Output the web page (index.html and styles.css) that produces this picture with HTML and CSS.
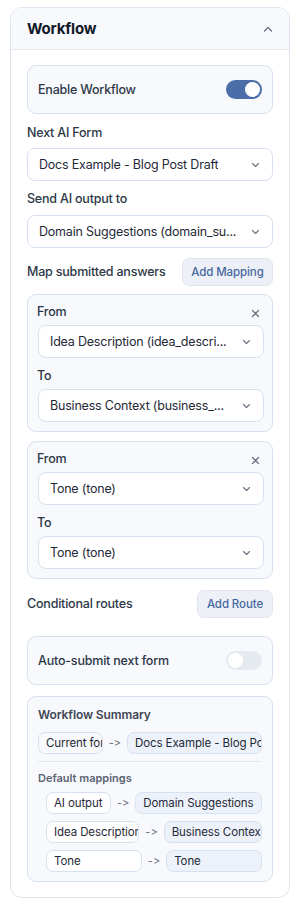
FILE: index.html
```html
<!DOCTYPE html>
<html>
<head>
<meta charset="utf-8">
<link rel="stylesheet" href="styles.css">
</head>
<body>
<div class="panel">
  <div class="panel-head">
    <span class="panel-title">Workflow</span>
    <svg class="head-chev" width="10" height="6" viewBox="0 0 10 6"><path d="M1.5 5 L5 1.5 L8.5 5" fill="none" stroke="#6b7280" stroke-width="1.3" stroke-linecap="round" stroke-linejoin="round"/></svg>
  </div>
  <div class="panel-body">
    <div class="toggle-box">
      <span class="toggle-label">Enable Workflow</span>
      <span class="switch on"><span class="knob"></span></span>
    </div>

    <div class="field-label l1">Next AI Form</div>
    <div class="select">
      <span class="select-text">Docs Example - Blog Post Draft</span>
      <svg class="chev" width="9" height="6" viewBox="0 0 9 6"><path d="M1.5 1.5 L4.5 4.5 L7.5 1.5" fill="none" stroke="#6b7280" stroke-width="1.1" stroke-linecap="round" stroke-linejoin="round"/></svg>
    </div>

    <div class="field-label l2">Send AI output to</div>
    <div class="select">
      <span class="select-text">Domain Suggestions (domain_su...</span>
      <svg class="chev" width="9" height="6" viewBox="0 0 9 6"><path d="M1.5 1.5 L4.5 4.5 L7.5 1.5" fill="none" stroke="#6b7280" stroke-width="1.1" stroke-linecap="round" stroke-linejoin="round"/></svg>
    </div>

    <div class="row-head r1">
      <span class="field-label">Map submitted answers</span>
      <button class="btn btn-map">Add Mapping</button>
    </div>

    <div class="map-card m1">
      <div class="map-top">
        <span class="map-label">From</span>
        <svg class="close" width="9" height="9" viewBox="0 0 9 9"><path d="M1.5 1.5 L7.5 7.5 M7.5 1.5 L1.5 7.5" fill="none" stroke="#6b7280" stroke-width="1.3" stroke-linecap="round"/></svg>
      </div>
      <div class="select">
        <span class="select-text">Idea Description (idea_descri...</span>
        <svg class="chev" width="9" height="6" viewBox="0 0 9 6"><path d="M1.5 1.5 L4.5 4.5 L7.5 1.5" fill="none" stroke="#6b7280" stroke-width="1.1" stroke-linecap="round" stroke-linejoin="round"/></svg>
      </div>
      <div class="map-label to">To</div>
      <div class="select">
        <span class="select-text">Business Context (business_...</span>
        <svg class="chev" width="9" height="6" viewBox="0 0 9 6"><path d="M1.5 1.5 L4.5 4.5 L7.5 1.5" fill="none" stroke="#6b7280" stroke-width="1.1" stroke-linecap="round" stroke-linejoin="round"/></svg>
      </div>
    </div>

    <div class="map-card m2">
      <div class="map-top">
        <span class="map-label">From</span>
        <svg class="close" width="9" height="9" viewBox="0 0 9 9"><path d="M1.5 1.5 L7.5 7.5 M7.5 1.5 L1.5 7.5" fill="none" stroke="#6b7280" stroke-width="1.3" stroke-linecap="round"/></svg>
      </div>
      <div class="select">
        <span class="select-text">Tone (tone)</span>
        <svg class="chev" width="9" height="6" viewBox="0 0 9 6"><path d="M1.5 1.5 L4.5 4.5 L7.5 1.5" fill="none" stroke="#6b7280" stroke-width="1.1" stroke-linecap="round" stroke-linejoin="round"/></svg>
      </div>
      <div class="map-label to">To</div>
      <div class="select">
        <span class="select-text">Tone (tone)</span>
        <svg class="chev" width="9" height="6" viewBox="0 0 9 6"><path d="M1.5 1.5 L4.5 4.5 L7.5 1.5" fill="none" stroke="#6b7280" stroke-width="1.1" stroke-linecap="round" stroke-linejoin="round"/></svg>
      </div>
    </div>

    <div class="row-head r2">
      <span class="field-label">Conditional routes</span>
      <button class="btn btn-route">Add Route</button>
    </div>

    <div class="toggle-box auto">
      <span class="toggle-label">Auto-submit next form</span>
      <span class="switch off"><span class="knob"></span></span>
    </div>

    <div class="summary">
      <div class="sum-title">Workflow Summary</div>
      <div class="flow-row main">
        <span class="pill">Current form</span>
        <span class="arrow">-&gt;</span>
        <span class="pill blue">Docs Example - Blog Post Draft</span>
      </div>
      <div class="divider"></div>
      <div class="sum-sub">Default mappings</div>
      <div class="mappings">
        <div class="flow-row">
          <span class="pill white">AI output</span>
          <span class="arrow">-&gt;</span>
          <span class="pill blue">Domain Suggestions</span>
        </div>
        <div class="flow-row">
          <span class="pill white">Idea Description</span>
          <span class="arrow">-&gt;</span>
          <span class="pill blue">Business Context</span>
        </div>
        <div class="flow-row">
          <span class="pill white">Tone</span>
          <span class="arrow">-&gt;</span>
          <span class="pill blue">Tone</span>
        </div>
      </div>
    </div>
  </div>
</div>
</body>
</html>
```

FILE: styles.css
```css
* { box-sizing: border-box; }
html, body { margin: 0; padding: 0; background: #ffffff; }
body {
  font-family: Inter, "Noto Sans", sans-serif;
  font-variant-ligatures: none;
  font-feature-settings: "calt" 0, "liga" 0;
  color: #1f2937;
  padding: 7px 11px 9px 10px;
}
.panel {
  width: 280px;
  border: 1px solid #dfe5ee;
  border-radius: 12px;
  overflow: hidden;
  background: #fff;
}
.panel-head {
  height: 42px;
  background: #f7f9fc;
  border-bottom: 1px solid #e4e9f0;
  display: flex;
  align-items: center;
  justify-content: space-between;
  padding: 0 16px 0 16px;
}
.panel-title {
  font-size: 15px;
  font-weight: 700;
  color: #111827;
  letter-spacing: -0.2px;
}
.panel-body {
  padding: 15px 16px 15px 16px;
  display: flex;
  flex-direction: column;
}
.toggle-box {
  height: 49px;
  border: 1px solid #d7e1ef;
  border-radius: 9px;
  background: #f7f9fc;
  display: flex;
  align-items: center;
  justify-content: space-between;
  padding: 0 10px 0 10px;
}
.toggle-label {
  font-size: 12.5px;
  letter-spacing: -0.2px;
  font-weight: 500;
  color: #2d3748;
}
.switch {
  width: 36px;
  height: 19px;
  border-radius: 10px;
  display: flex;
  align-items: center;
  padding: 0 2px;
}
.switch .knob {
  width: 15px;
  height: 15px;
  border-radius: 50%;
  background: #fff;
}
.switch.on { background: #4b6ea8; justify-content: flex-end; }
.switch.off { background: #e5e9f0; justify-content: flex-start; }
.field-label {
  font-size: 12.5px;
  letter-spacing: -0.2px;
  font-weight: 500;
  color: #2d3748;
  line-height: 18px;
}
.l1 { margin-top: 10px; margin-bottom: 6px; }
.l2 { margin-top: 9px; margin-bottom: 7px; }
.select {
  height: 33px;
  border: 1px solid #d7e1ef;
  border-radius: 8px;
  background: #fff;
  display: flex;
  align-items: center;
  justify-content: space-between;
  gap: 6px;
  padding: 0 12px 0 11px;
}
.select-text {
  font-size: 12.5px;
  letter-spacing: -0.2px;
  color: #1f2937;
  white-space: nowrap;
  overflow: hidden;
}
.chev { flex: none; }
.row-head {
  display: flex;
  align-items: center;
  justify-content: space-between;
}
.r1 { margin-top: 10px; }
.r2 { margin-top: 11px; }
.btn {
  height: 28px;
  border: 1px solid #e0e6ef;
  border-radius: 7px;
  background: #edf1f7;
  color: #46679f;
  font-family: Inter, "Noto Sans", sans-serif;
  font-size: 11.5px;
  letter-spacing: -0.1px;
  font-weight: 500;
  padding: 0;
  white-space: nowrap;
}
.btn-map { width: 91px; }
.btn-route { width: 76px; }
.map-card {
  border: 1px solid #d7e1ef;
  border-radius: 9px;
  background: #f7f9fc;
  padding: 8px 8px 9px 10px;
  display: flex;
  flex-direction: column;
}
.m1 { margin-top: 8px; }
.m2 { margin-top: 9px; }
.map-top {
  display: flex;
  justify-content: space-between;
  align-items: center;
  height: 18px;
  margin-bottom: 4px;
}
.map-top .close { margin-right: 4px; margin-top: 2px; }
.map-label {
  font-size: 12.5px;
  letter-spacing: -0.2px;
  font-weight: 500;
  color: #2d3748;
  line-height: 18px;
  margin-left: -1px;
}
.map-label.to { margin-top: 9px; margin-bottom: 4px; }
.auto { margin-top: 18px; }
.summary {
  margin-top: 11px;
  border: 1px solid #d7e1ef;
  border-radius: 9px;
  background: #f7f9fc;
  padding: 9px 10px 9px 10px;
}
.sum-title {
  font-size: 12px;
  letter-spacing: -0.1px;
  font-weight: 600;
  color: #3f4756;
  line-height: 18px;
}
.flow-row {
  display: flex;
  align-items: center;
  gap: 6px;
  height: 22px;
}
.flow-row.main { margin-top: 8px; }
.pill {
  flex: 1 1 auto;
  min-width: 0;
  height: 22px;
  line-height: 20px;
  border: 1px solid #d7e1ef;
  border-radius: 7px;
  background: #f7f9fc;
  padding: 0 7px;
  font-size: 11.5px;
  letter-spacing: -0.1px;
  color: #1f2937;
  white-space: nowrap;
  overflow: hidden;
}
.pill.white { background: #fff; }
.pill.blue { background: #edf2fa; }
.arrow {
  flex: none;
  font-size: 11px;
  color: #6b7280;
}
.divider {
  height: 1px;
  background: #e3e8ef;
  margin-top: 7px;
}
.sum-sub {
  font-size: 11px;
  font-weight: 600;
  color: #5b6372;
  line-height: 16px;
  margin-top: 8px;
}
.mappings {
  padding-left: 8px;
  margin-top: 6px;
  display: flex;
  flex-direction: column;
  gap: 7px;
}
```
